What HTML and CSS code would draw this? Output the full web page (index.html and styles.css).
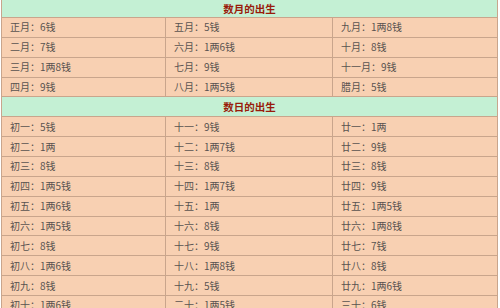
FILE: index.html
```html
<!DOCTYPE html>
<html lang="zh-CN">
<head>
<meta charset="utf-8">
<title>数月的出生</title>
<link rel="stylesheet" href="styles.css">
</head>
<body>
<table class="weight-table">
  <colgroup>
    <col class="c1"><col class="c2"><col class="c3">
  </colgroup>
  <tbody>
    <tr class="head first"><th colspan="3">数月的出生</th></tr>
    <tr><td>正月：6钱</td><td>五月：5钱</td><td>九月：1两8钱</td></tr>
    <tr><td>二月：7钱</td><td>六月：1两6钱</td><td>十月：8钱</td></tr>
    <tr><td>三月：1两8钱</td><td>七月：9钱</td><td>十一月：9钱</td></tr>
    <tr><td>四月：9钱</td><td>八月：1两5钱</td><td>腊月：5钱</td></tr>
    <tr class="head"><th colspan="3">数日的出生</th></tr>
    <tr><td>初一：5钱</td><td>十一：9钱</td><td>廿一：1两</td></tr>
    <tr><td>初二：1两</td><td>十二：1两7钱</td><td>廿二：9钱</td></tr>
    <tr><td>初三：8钱</td><td>十三：8钱</td><td>廿三：8钱</td></tr>
    <tr><td>初四：1两5钱</td><td>十四：1两7钱</td><td>廿四：9钱</td></tr>
    <tr><td>初五：1两6钱</td><td>十五：1两</td><td>廿五：1两5钱</td></tr>
    <tr><td>初六：1两5钱</td><td>十六：8钱</td><td>廿六：1两8钱</td></tr>
    <tr><td>初七：8钱</td><td>十七：9钱</td><td>廿七：7钱</td></tr>
    <tr><td>初八：1两6钱</td><td>十八：1两8钱</td><td>廿八：8钱</td></tr>
    <tr><td>初九：8钱</td><td>十九：5钱</td><td>廿九：1两6钱</td></tr>
    <tr><td>初十：1两6钱</td><td>二十：1两5钱</td><td>三十：6钱</td></tr>
  </tbody>
</table>
</body>
</html>
```

FILE: styles.css
```css
html, body {
  margin: 0;
  padding: 0;
  background: #ffffff;
  overflow: hidden;
}

.weight-table {
  margin-left: 1px;
  width: 497px;
  table-layout: fixed;
  border-collapse: separate;
  border-spacing: 0;
  border-left: 1px solid #c9a58c;
  font-family: "Noto Sans CJK SC", "Noto Sans", sans-serif;
  font-size: 10px;
  color: #595350;
}

.c1 { width: 164px; }
.c2 { width: 167px; }
.c3 { width: 165px; }

.weight-table tr {
  height: 19.86px;
}

.weight-table tr.first {
  height: 18px;
}

.weight-table td,
.weight-table th {
  box-sizing: border-box;
  padding: 0 0 0 8px;
  line-height: 12px;
  border-right: 1px solid #c9a58c;
  border-bottom: 1px solid #c9a58c;
  background: #f8d0b2;
  text-align: left;
  vertical-align: middle;
  white-space: nowrap;
}

.weight-table .head th {
  background: #c4f0d4;
  color: #991b0b;
  font-weight: bold;
  font-size: 10.5px;
  text-align: center;
  padding: 0;
}
```
